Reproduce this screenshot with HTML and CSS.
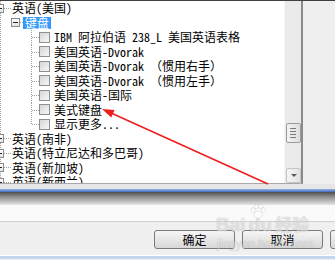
FILE: index.html
```html
<!DOCTYPE html>
<html lang="zh-CN">
<head>
    <meta charset="UTF-8">
    <title>键盘设置</title>
    <link rel="stylesheet" href="styles.css">
</head>
<body>
    <div class="screen">
        <div class="top">
            <div class="panel">
                <div class="tree">
                    <div class="row lv0"><span class="exp open"></span><span class="stub"></span><span class="label">英语(美国)</span></div>
                    <div class="row lv1"><span class="exp open"></span><span class="stub short"></span><span class="label sel">键盘</span></div>
                    <div class="row lv2"><span class="branch"></span><span class="check"></span><span class="label">IBM 阿拉伯语 238_L 美国英语表格</span></div>
                    <div class="row lv2"><span class="branch"></span><span class="check"></span><span class="label">美国英语-Dvorak</span></div>
                    <div class="row lv2"><span class="branch"></span><span class="check"></span><span class="label">美国英语-Dvorak （惯用右手）</span></div>
                    <div class="row lv2"><span class="branch"></span><span class="check"></span><span class="label">美国英语-Dvorak （惯用左手）</span></div>
                    <div class="row lv2"><span class="branch"></span><span class="check"></span><span class="label">美国英语-国际</span></div>
                    <div class="row lv2"><span class="branch"></span><span class="check"></span><span class="label">美式键盘</span></div>
                    <div class="row lv2 last"><span class="branch"></span><span class="check"></span><span class="label">显示更多...</span></div>
                    <div class="row lv0"><span class="exp"></span><span class="stub"></span><span class="label">英语(南非)</span></div>
                    <div class="row lv0"><span class="exp"></span><span class="stub"></span><span class="label">英语(特立尼达和多巴哥)</span></div>
                    <div class="row lv0"><span class="exp"></span><span class="stub"></span><span class="label">英语(新加坡)</span></div>
                    <div class="row lv0"><span class="exp"></span><span class="stub"></span><span class="label">英语(新西兰)</span></div>
                </div>
                <div class="vscroll">
                    <div class="thumb"><i></i><i></i><i></i><i></i></div>
                    <div class="down"></div>
                </div>
            </div>
            <div class="side"></div>
        </div>
        <div class="band"></div>
        <div class="blue"></div>
        <div class="shade"></div>
        <div class="light"></div>
        <div class="footer">
            <button class="btn">确定</button>
            <button class="btn">取消</button>
            <button class="btn"></button>
        </div>
        <div class="bottom"></div>

        <div class="watermark">
            <svg class="paw" width="16" height="15" viewBox="0 0 16 15">
                <ellipse cx="3" cy="6" rx="2" ry="2.5"/>
                <ellipse cx="6.5" cy="2.5" rx="2" ry="2.3"/>
                <ellipse cx="10.5" cy="2.5" rx="2" ry="2.3"/>
                <ellipse cx="13.5" cy="6" rx="2" ry="2.5"/>
                <path d="M8.3 7 C5.5 7 3.5 10.5 4.5 12.5 C5.5 14.5 11 14.5 12 12.5 C13 10.5 11 7 8.3 7 Z"/>
            </svg>
            <div class="wm-logo">Bai du <span class="wm-cn">经验</span></div>
            <div class="wm-url">jingyan.baidu.com</div>
        </div>

        <svg class="arrow" width="335" height="260" viewBox="0 0 335 260">
            <line x1="268" y1="184" x2="110" y2="112.5" stroke="#ee1c1c" stroke-width="1.5"/>
            <polygon points="102,109 114.6,109.9 111.2,117.6" fill="#ee1c1c"/>
        </svg>
    </div>
</body>
</html>
```
FILE: styles.css
```css
body {
    margin: 0;
    background: #f0f0f0;
    font-family: "Noto Sans Mono CJK SC", "Noto Sans CJK SC", sans-serif;
    font-size: 12px;
    color: #000;
}

.screen {
    position: relative;
    width: 335px;
    height: 260px;
    overflow: hidden;
}

/* upper area: tree view + scrollbar */
.top {
    display: flex;
    height: 183px;
    border-top: 1px solid #404040;
}

.panel {
    display: flex;
    width: 301px;
    border-right: 2px solid #8a8a8a;
    border-bottom: 1px solid #a8a8a8;
    background: #fff;
}

.side {
    flex: 1;
    background: #efefef;
}

.tree {
    flex: 1;
    overflow: hidden;
    background: linear-gradient(#a0a0a0 50%, transparent 0) 0 0 / 1px 2px repeat-y;
}

.row {
    display: flex;
    align-items: center;
    height: 14.5px;
    white-space: nowrap;
    line-height: 14.5px;
}

.exp {
    position: relative;
    flex: none;
    box-sizing: border-box;
    width: 9px;
    height: 9px;
    border: 1px solid #8c8c8c;
    background: linear-gradient(#fff, #e4e4e4);
}

.exp::before {
    content: "";
    position: absolute;
    left: 1px;
    top: 3px;
    width: 5px;
    height: 1px;
    background: #222;
}

.exp:not(.open)::after {
    content: "";
    position: absolute;
    left: 3px;
    top: 1px;
    width: 1px;
    height: 5px;
    background: #222;
}

.lv0 .exp {
    margin-left: -5px;
}

.lv1 .exp {
    margin-left: 11px;
}

.stub {
    flex: none;
    width: 7px;
    height: 1px;
    background: linear-gradient(90deg, #a0a0a0 50%, transparent 0) 0 0 / 2px 1px repeat-x;
}

.stub.short {
    width: 3px;
}

.label {
    padding-left: 1px;
}

.label.sel {
    padding: 0 2px;
    height: 12px;
    line-height: 12px;
    background: #3399ff;
    color: #fff;
}

.branch {
    position: relative;
    flex: none;
    align-self: stretch;
    width: 8px;
    margin-left: 31px;
}

.branch::before {
    content: "";
    position: absolute;
    left: 0;
    top: 0;
    width: 1px;
    height: 100%;
    background: linear-gradient(#a0a0a0 50%, transparent 0) 0 0 / 1px 2px repeat-y;
}

.last .branch::before {
    height: 50%;
}

.branch::after {
    content: "";
    position: absolute;
    left: 1px;
    top: 50%;
    width: 7px;
    height: 1px;
    background: linear-gradient(90deg, #a0a0a0 50%, transparent 0) 0 0 / 2px 1px repeat-x;
}

.check {
    flex: none;
    box-sizing: border-box;
    width: 11px;
    height: 11px;
    margin-right: 3px;
    border: 1px solid #8e8f8f;
    background: linear-gradient(135deg, #d6d6d6, #f7f7f7);
}

.vscroll {
    display: flex;
    flex-direction: column;
    align-items: center;
    width: 17px;
    padding-top: 122px;
    background: #ebebeb;
    border-left: 1px solid #f6f6f6;
    box-sizing: border-box;
}

.thumb {
    display: flex;
    flex-direction: column;
    align-items: center;
    justify-content: center;
    gap: 2px;
    box-sizing: border-box;
    width: 15px;
    height: 20px;
    border: 1px solid #9a9a9a;
    border-radius: 2px;
    background: linear-gradient(90deg, #f3f3f3, #dedede);
}

.thumb i {
    display: block;
    width: 6px;
    height: 1px;
    background: #7b7b7b;
}

.down {
    position: relative;
    margin-top: auto;
    box-sizing: border-box;
    width: 15px;
    height: 15px;
    border: 1px solid #c4c4c4;
    border-radius: 2px;
    background: linear-gradient(90deg, #f5f5f5, #e2e2e2);
}

.down::after {
    content: "";
    position: absolute;
    left: 4px;
    top: 5px;
    border-left: 3px solid transparent;
    border-right: 3px solid transparent;
    border-top: 3px solid #5a5a5a;
}

/* bands between tree and buttons */
.band {
    height: 5px;
    background: #e6e6e6;
}

.blue {
    height: 3px;
    background: linear-gradient(#9ab8e8, #3f69ba);
}

.shade {
    height: 13px;
    background: linear-gradient(#4e4e4e, #8a8a8a 35%, #e6e6e6);
}

.light {
    height: 16px;
    background: #fafafa;
    border-bottom: 1px solid #cfcfcf;
}

.footer {
    display: flex;
    gap: 7px;
    height: 33px;
    padding: 8px 0 0 154px;
    box-sizing: border-box;
}

.btn {
    flex: none;
    width: 81px;
    height: 19px;
    padding: 0;
    border: 1px solid #7a7a7a;
    border-radius: 3px;
    background: linear-gradient(#f6f6f6, #e6e6e6 50%, #d8d8d8);
    font-family: "Noto Sans CJK SC", sans-serif;
    font-size: 12px;
    line-height: 16px;
    color: #000;
}

.bottom {
    height: 3px;
    border-top: 1px solid #fff;
    background: #c4d5ef;
}

/* faint site watermark */
.watermark {
    position: absolute;
    left: 216px;
    top: 212px;
    color: rgba(255, 255, 255, 0.6);
    text-shadow: 0 0 1px rgba(0, 0, 0, 0.28);
    font-family: "Liberation Sans", sans-serif;
}

.paw {
    position: absolute;
    left: 34px;
    top: -8px;
    fill: rgba(255, 255, 255, 0.6);
    stroke: rgba(0, 0, 0, 0.15);
    stroke-width: 0.6;
}

.wm-logo {
    font-size: 19px;
    font-weight: bold;
    line-height: 24px;
    word-spacing: -2px;
}

.wm-cn {
    font-family: "Noto Sans CJK SC", sans-serif;
    font-size: 17px;
    word-spacing: 0;
}

.wm-url {
    font-size: 12px;
    line-height: 14px;
    padding-left: 1px;
}

.arrow {
    position: absolute;
    left: 0;
    top: 0;
    pointer-events: none;
}
```
